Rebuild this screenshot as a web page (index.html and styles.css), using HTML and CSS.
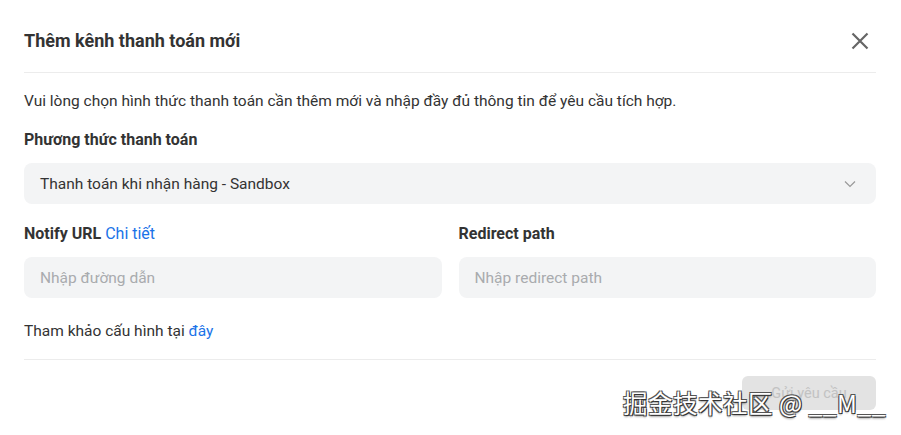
FILE: index.html
```html
<!DOCTYPE html>
<html lang="vi">
<head>
<meta charset="utf-8">
<link rel="stylesheet" href="styles.css">
</head>
<body>
<div class="modal">
  <div class="header">
    <h1 class="title">Thêm kênh thanh toán mới</h1>
    <button class="close" aria-label="Đóng">
      <svg width="18" height="18" viewBox="0 0 18 18"><path d="M1.5 1.5L16.5 16.5M16.5 1.5L1.5 16.5" stroke="#666" stroke-width="2.2" stroke-linecap="butt" fill="none"/></svg>
    </button>
  </div>
  <div class="body">
    <p class="desc">Vui lòng chọn hình thức thanh toán cần thêm mới và nhập đầy đủ thông tin để yêu cầu tích hợp.</p>
    <div class="label">Phương thức thanh toán</div>
    <div class="select">
      <span>Thanh toán khi nhận hàng - Sandbox</span>
      <svg width="12" height="8" viewBox="0 0 12 8"><path d="M1 1.5L6 6.5L11 1.5" stroke="#999" stroke-width="1.2" fill="none"/></svg>
    </div>
    <div class="row">
      <div class="field">
        <div class="label">Notify URL <a class="link">Chi tiết</a></div>
        <div class="input placeholder">Nhập đường dẫn</div>
      </div>
      <div class="field">
        <div class="label">Redirect path</div>
        <div class="input placeholder">Nhập redirect path</div>
      </div>
    </div>
    <p class="ref">Tham khảo cấu hình tại <a class="link">đây</a></p>
  </div>
  <div class="footer">
    <button class="submit">Gửi yêu cầu</button>
  </div>
</div>
<div class="watermark">掘金技术社区 @ __M__</div>
</body>
</html>
```

FILE: styles.css
```css
* { box-sizing: border-box; }
html, body { margin: 0; padding: 0; background: #fff; }
body {
  font-family: Roboto, "Noto Sans", Arial, sans-serif;
  color: #333;
  width: 901px;
  height: 435px;
  overflow: hidden;
  position: relative;
}
.modal { padding: 0 25px 0 24px; }
.header {
  height: 73px;
  display: flex;
  align-items: center;
  justify-content: space-between;
  border-bottom: 1px solid #ececec;
  padding-top: 9px;
}
.title {
  margin: 0;
  font-size: 18px;
  font-weight: 700;
  color: #333;
  line-height: 24px;
}
.close {
  border: 0;
  background: none;
  padding: 0;
  margin-right: 7px;
  width: 18px;
  height: 18px;
  display: flex;
}
.body { padding-top: 17px; }
.desc { margin: 0; font-size: 15.5px; line-height: 22px; }
.label {
  font-size: 16px;
  font-weight: 700;
  line-height: 22px;
  margin-top: 17px;
}
.link { color: #1a73e8; font-weight: 400; text-decoration: none; cursor: pointer; }
.select {
  margin-top: 12px;
  height: 41px;
  background: #f3f4f5;
  border-radius: 8px;
  display: flex;
  align-items: center;
  justify-content: space-between;
  padding: 0 20px 0 16px;
  font-size: 15.5px;
}
.row {
  display: grid;
  grid-template-columns: 1fr 1fr;
  column-gap: 17px;
  margin-top: 2px;
}
.row .label { margin-top: 17px; }
.input {
  margin-top: 12px;
  height: 41px;
  background: #f3f4f5;
  border-radius: 8px;
  display: flex;
  align-items: center;
  padding: 0 16px;
  font-size: 15.5px;
}
.placeholder { color: #a9abae; }
.ref { margin: 22px 0 0; font-size: 15.5px; line-height: 22px; padding-bottom: 17px; border-bottom: 1px solid #ececec; }
.footer {
  display: flex;
  justify-content: flex-end;
  padding-top: 16px;
}
.submit {
  width: 134px;
  height: 34px;
  border: 0;
  border-radius: 6px;
  background: #e3e3e3;
  color: #c2c2c2;
  font-family: Roboto, "Noto Sans", Arial, sans-serif;
  font-size: 14.5px;
}
.watermark {
  position: absolute;
  left: 623px;
  top: 387px;
  font-family: "Noto Sans CJK SC", "Noto Sans", sans-serif;
  font-size: 24.5px;
  line-height: 32px;
  color: #fff;
  letter-spacing: 0.5px;
  text-shadow: 1px 1px 0 #333, -1px -1px 0 #555, 1px -1px 0 #555, -1px 1px 0 #555, 0 2px 2px rgba(0,0,0,0.4);
  white-space: pre;
}
```
